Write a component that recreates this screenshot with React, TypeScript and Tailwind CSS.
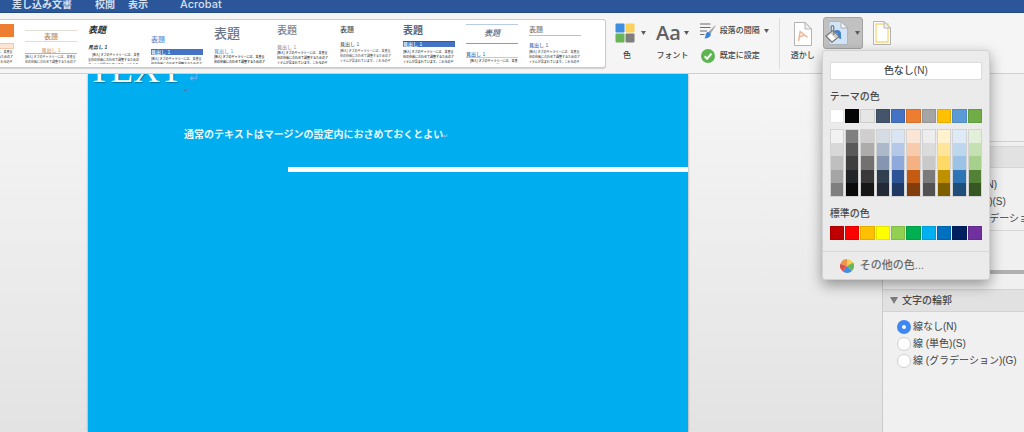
import type { ReactNode } from "react";

const menuItems = ["差し込み文書", "校閲", "表示", "Acrobat"];

type Style = { title: string; heading: string; text: string; blocksOnly?: boolean };

const styleGallery: Style[] = [
  {
    title: "h-[13px] bg-[#ed7d31]",
    heading: "mt-[6px] h-[6px] bg-[#fbe5d5] border border-[#f4c7a5]",
    text: "text-[#444]",
    blocksOnly: true,
  },
  {
    title: "mt-[6px] h-3 justify-center border-y border-[#e2dcd6] text-[7px] font-medium text-[#b98c68]",
    heading: "mt-[5px] h-[7px] justify-center border-b border-[#e3a778] text-[#c9a184]",
    text: "text-[#555]",
  },
  {
    title: "h-[13px] text-[9px] font-bold italic text-[#2b2b2b]",
    heading: "mt-[7px] h-[6px] font-bold italic text-[#333]",
    text: "mt-[2px] indent-1 text-[#444]",
  },
  {
    title: "mt-[9px] h-3 text-[7px] font-medium text-[#5b8fd0]",
    heading: "mt-1 h-[6px] bg-[#4472c4] text-white",
    text: "mt-px text-[#444]",
  },
  {
    title: "h-[18px] text-[13px] text-[#6d7688]",
    heading: "mt-[6px] h-[6px] text-[#6f9fd8]",
    text: "text-[#222]",
  },
  {
    title: "h-[14px] text-[10px] text-[#7d828e]",
    heading: "mt-[6px] h-[6px] text-[#999]",
    text: "text-[#333]",
  },
  {
    title: "h-[11px] text-[7px] font-medium text-[#4a4a4a]",
    heading: "mt-[6px] h-[6px] text-[#666]",
    text: "mt-px text-[#555]",
  },
  {
    title: "h-[14px] text-[10px] font-bold text-[#52637c]",
    heading: "mt-[3px] h-[6px] border-t border-[#555] bg-[#4472c4] text-white",
    text: "mt-[2px] text-[#333]",
  },
  {
    title: "h-5 justify-center border-t border-b border-t-[#b9cde6] border-b-[#9a9a9a] text-[8px] font-medium italic text-[#5a6a85]",
    heading: "mt-[7px] h-[7px] border-b border-[#b9cde6] text-[#3d70b5]",
    text: "indent-1 text-[#333]",
  },
  {
    title: "h-3 border-b border-[#a9c4e4] text-[7px] font-medium text-[#7b7b7b]",
    heading: "mt-[6px] h-[6px] text-[#3d70b5]",
    text: "mt-px text-[#444]",
  },
];

const themeColors = [
  { name: "白", base: "bg-white", tints: ["bg-[#f2f2f2]", "bg-[#d8d8d8]", "bg-[#bfbfbf]", "bg-[#a5a5a5]", "bg-[#7f7f7f]"] },
  { name: "黒", base: "bg-[#050505]", tints: ["bg-[#7f7f7f]", "bg-[#595959]", "bg-[#3f3f3f]", "bg-[#222428]", "bg-[#0a0a0a]"] },
  { name: "薄い灰色", base: "bg-[#e7e6e6]", tints: ["bg-[#d0cece]", "bg-[#aeabab]", "bg-[#737070]", "bg-[#3a3838]", "bg-[#171616]"] },
  { name: "ブルーグレー", base: "bg-[#44546a]", tints: ["bg-[#d6dce4]", "bg-[#adb9ca]", "bg-[#8496b0]", "bg-[#323f4f]", "bg-[#222a35]"] },
  { name: "青", base: "bg-[#4472c4]", tints: ["bg-[#d9e5f3]", "bg-[#b4c9e7]", "bg-[#8eaadb]", "bg-[#2f5496]", "bg-[#1f3864]"] },
  { name: "オレンジ", base: "bg-[#ed7d31]", tints: ["bg-[#fbe5d5]", "bg-[#f7cbac]", "bg-[#f4b183]", "bg-[#c55a11]", "bg-[#833c0b]"] },
  { name: "灰色", base: "bg-[#a5a5a5]", tints: ["bg-[#ededed]", "bg-[#dbdbdb]", "bg-[#c9c9c9]", "bg-[#7b7b7b]", "bg-[#525252]"] },
  { name: "ゴールド", base: "bg-[#ffc000]", tints: ["bg-[#fff2cc]", "bg-[#fee599]", "bg-[#ffd965]", "bg-[#bf9000]", "bg-[#7f6000]"] },
  { name: "水色", base: "bg-[#5b9bd5]", tints: ["bg-[#deebf6]", "bg-[#bdd7ee]", "bg-[#9cc3e5]", "bg-[#2e75b5]", "bg-[#1e4e79]"] },
  { name: "緑", base: "bg-[#70ad47]", tints: ["bg-[#e2efd9]", "bg-[#c5e0b3]", "bg-[#a8d08d]", "bg-[#538135]", "bg-[#375623]"] },
];

const standardColors = [
  { name: "濃い赤", color: "bg-[#c00000]" },
  { name: "赤", color: "bg-[#ff0000]" },
  { name: "オレンジ", color: "bg-[#ffc000]" },
  { name: "黄", color: "bg-[#ffff00]" },
  { name: "薄い緑", color: "bg-[#92d050]" },
  { name: "緑", color: "bg-[#00b050]" },
  { name: "薄い青", color: "bg-[#00b0f0]" },
  { name: "青", color: "bg-[#0070c0]" },
  { name: "濃い青", color: "bg-[#002060]" },
  { name: "紫", color: "bg-[#7030a0]" },
];

function Caret() {
  return (
    <svg className="h-1 w-[5px] shrink-0" viewBox="0 0 5 4" aria-hidden="true">
      <path d="M0 0h5L2.5 4z" fill="#5c5c5c" />
    </svg>
  );
}

function StyleCard({ style }: { style: Style }) {
  return (
    <button type="button" className="flex h-10 w-[52px] shrink-0 flex-col overflow-hidden text-left leading-none">
      <span className={`flex w-full shrink-0 items-center ${style.title}`}>{style.blocksOnly ? null : "表題"}</span>
      <span className={`flex w-full shrink-0 items-center text-[5px] ${style.heading}`}>
        {style.blocksOnly ? null : "見出し 1"}
      </span>
      <span className={`w-full pt-px text-[3px] leading-[5px] font-medium ${style.text}`}>
        [挿入] タブのギャラリーには、文書全体の体裁に合わせて調整するためのアイテムが含まれています。これらのギ
      </span>
    </button>
  );
}

function ColorsIcon() {
  return (
    <svg className="h-5 w-5" viewBox="0 0 20 20" aria-hidden="true">
      <rect x="0.5" y="0.5" width="9" height="9" rx="1" fill="#3f8fe0" />
      <rect x="10.5" y="0.5" width="9" height="9" rx="1" fill="#fbd15b" />
      <rect x="0.5" y="10.5" width="9" height="9" rx="1" fill="#68b457" />
      <rect x="10.5" y="10.5" width="9" height="9" rx="1" fill="#7f7f7f" />
    </svg>
  );
}

function SpacingIcon() {
  return (
    <svg className="h-4 w-4" viewBox="0 0 16 16" aria-hidden="true">
      <path d="M0 1h10.500M0 4.500h10.500M0 8h7M0 11.500h4.500" stroke="#6d6d6d" strokeWidth="1.100" />
      <path d="M15.800 2.600 10.800 10.400 8.600 8.800 15 2.400z" fill="#a7a7a7" />
      <path d="M8 9c2 0 3.300 1.500 2.700 3.200C10 14.500 7 15.600 4 15.300c1.500-.8 1.300-2 1.700-3.600C6 10.200 6.800 9 8 9z" fill="#3b83d8" />
    </svg>
  );
}

function CheckIcon() {
  return (
    <svg className="h-4 w-4" viewBox="0 0 16 16" aria-hidden="true">
      <circle cx="8" cy="8" r="7" fill="#5cb551" />
      <path d="m4.700 8.200 2.400 2.500 4.400-5" fill="none" stroke="#fff" strokeWidth="2" />
    </svg>
  );
}

function PageIcon({ children }: { children: ReactNode }) {
  return (
    <svg className="h-6 w-[18px]" viewBox="0 0 18 24" aria-hidden="true">
      <path d="M.5.500h10.500l6.500 6.500v16.500H.500z" fill="#fff" stroke="#b4b4b4" />
      {children}
      <path d="M11 .500V7h6.500z" fill="#f1f1f1" stroke="#b4b4b4" />
    </svg>
  );
}

function PageColorIcon() {
  return (
    <svg className="h-6 w-6" viewBox="0 0 24 24" aria-hidden="true">
      <path d="M4 .500h12l6.500 6.500v16.500H4z" fill="#d3e4f6" stroke="#aeb8c2" />
      <path d="M16 .500V7h6.500z" fill="#f5f5f5" stroke="#adadad" />
      <path d="M9.500 9.500c3.500-1.500 6.300 0 6.500 3 .1 2.200-.2 3.500.3 5.500-2.300 0-3.300-1.200-3.300-3.500 0-2-1-3-3.500-2.500z" fill="#3d82cf" />
      <path d="m1 15 7-5.500 6 6L7 21.200z" fill="#fff" stroke="#777" strokeWidth="1.300" />
      <path d="m8 10.500 5 5-2.500 2-5-5z" fill="#cdcdcd" />
      <path d="M8.800 14V6c0-1.800-2.600-1.800-2.600 0v5" fill="none" stroke="#777" strokeWidth="1.200" />
    </svg>
  );
}

function WheelIcon() {
  return (
    <svg className="h-[14px] w-[14px]" viewBox="-7 -7 14 14" aria-hidden="true">
      <path d="M0 0V-7A7 7 0 0 1 6.060-3.500z" fill="#f9d257" />
      <path d="M0 0 6.060-3.500A7 7 0 0 1 4.950 4.950z" fill="#69b65a" />
      <path d="M0 0 4.950 4.950A7 7 0 0 1-4.500 5.360z" fill="#438de0" />
      <path d="M0 0-4.500 5.360A7 7 0 0 1-6.600-2.330z" fill="#dc5249" />
      <path d="M0 0-6.600-2.330A7 7 0 0 1 0-7z" fill="#f29446" />
    </svg>
  );
}

function ColorPopup() {
  return (
    <div className="absolute top-[33px] -left-px z-20 w-[168px] rounded-[3px] border border-[#d2d2d2] bg-[#ebebeb] text-[10px] leading-none text-[#484848] shadow-[0_5px_14px_rgba(0,0,0,0.38)]">
      <div className="px-[7px] pt-[11px]">
        <button type="button" className="h-[18px] w-full border border-[#dcdcdc] bg-white">
          色なし(N)
        </button>
        <h2 className="mt-3 font-medium">テーマの色</h2>
        <div className="mt-[7px] grid grid-cols-10 gap-px">
          {themeColors.map((c) => (
            <button key={c.name} type="button" aria-label={c.name} className={`h-[14px] border border-black/10 ${c.base}`} />
          ))}
        </div>
        <div className="mt-[6px] grid grid-cols-10 gap-px">
          {themeColors.map((c) => (
            <div key={c.name} className="flex h-[68px] flex-col border border-black/10">
              {c.tints.map((t, i) => (
                <button key={t} type="button" aria-label={`${c.name} ${i + 1}`} className={`flex-1 ${t}`} />
              ))}
            </div>
          ))}
        </div>
        <h2 className="mt-3 font-medium">標準の色</h2>
        <div className="mt-[7px] grid grid-cols-10 gap-px pb-[11px]">
          {standardColors.map((c) => (
            <button key={c.name} type="button" aria-label={c.name} className={`h-[14px] border border-black/10 ${c.color}`} />
          ))}
        </div>
      </div>
      <button type="button" className="flex h-7 w-full items-center gap-[6px] border-t border-[#d6d6d6] pl-[17px] text-[11px] text-[#6a6a6a]">
        <WheelIcon />
        その他の色...
      </button>
    </div>
  );
}

function RadioGroup({ name, options, selected }: { name: string; options: string[]; selected: number }) {
  return (
    <div className="flex flex-col gap-[3px] pl-[14px]">
      {options.map((option, i) => (
        <label key={option} className="flex items-center gap-[2px] text-[10px] leading-[14px] whitespace-nowrap text-[#444]">
          <input
            type="radio"
            name={name}
            defaultChecked={i === selected}
            className="h-[14px] w-[14px] shrink-0 appearance-none rounded-full border border-[#cfcfcf] bg-white checked:border-[5px] checked:border-[#3f87f5]"
          />
          {option}
        </label>
      ))}
    </div>
  );
}

function Ribbon() {
  return (
    <div className="relative z-10 flex h-[61px] items-start border-b border-[#cfcfcf] bg-[#f5f5f5] text-[8px] leading-none font-medium text-[#444]">
      <div className="mt-[6px] flex h-[49px] w-[606px] shrink-0 justify-end gap-[11px] overflow-hidden rounded-r-[3px] border border-l-0 border-[#cdcdcd] bg-white pt-1 pr-6 shadow-[0_1px_1px_rgba(0,0,0,0.15)]">
        {styleGallery.map((s, i) => (
          <StyleCard key={i} style={s} />
        ))}
      </div>

      <button type="button" className="mt-[10px] ml-[9px] flex flex-col gap-[9px] text-left">
        <span className="flex h-5 items-center gap-[6px]">
          <ColorsIcon />
          <Caret />
        </span>
        <span className="pl-2">色</span>
      </button>

      <button type="button" className="mt-[10px] ml-[10px] flex flex-col items-center gap-[9px]">
        <span className="flex h-5 items-center gap-[3px]">
          <span className="font-['Open_Sans',sans-serif] text-[20px] font-semibold text-[#606060]">Aa</span>
          <Caret />
        </span>
        フォント
      </button>

      <div className="mt-[10px] ml-[11px] flex flex-col gap-[9px]">
        <button type="button" className="flex items-center gap-1">
          <SpacingIcon />
          段落の間隔
          <Caret />
        </button>
        <button type="button" className="flex items-center gap-1">
          <CheckIcon />
          既定に設定
        </button>
      </div>

      <div className="mt-[5px] ml-[10px] h-[51px] w-px bg-[#dcdcdc]" />

      <button type="button" className="mt-[9px] ml-[11px] flex flex-col items-center gap-[6px]">
        <PageIcon>
          <path d="m4.500 19 1.700-9.500 7.300 5.800M5.200 15.300l5.300-2.400" fill="none" stroke="#eeb691" strokeWidth="1.500" />
        </PageIcon>
        透かし
      </button>

      <div className="relative mt-1 ml-2">
        <button
          type="button"
          aria-label="ページの色"
          aria-expanded="true"
          className="flex h-8 w-10 items-center justify-center gap-[6px] rounded-[3px] border border-[#a3a3a3] bg-[#c1c1c1]"
        >
          <PageColorIcon />
          <Caret />
        </button>
        <ColorPopup />
      </div>

      <button type="button" aria-label="ページ罫線" className="mt-2 ml-[10px]">
        <PageIcon>
          <path d="M3 3h12v18H3z" fill="none" stroke="#fbd777" strokeWidth="1.300" />
        </PageIcon>
      </button>
    </div>
  );
}

export default function App() {
  return (
    <div className="flex min-h-screen flex-col overflow-hidden bg-[#ededed] font-['Liberation_Sans','Noto_Sans_CJK_JP',sans-serif]">
      <nav className="flex h-[13px] items-center gap-[13px] overflow-hidden border-b border-[#224a86] bg-[#2b579a] pb-[3px] pl-3 text-[10px] leading-none font-bold text-[#d5dfee]">
        {menuItems.map((m, i) => (
          <a key={m} href="#" className={i === 0 ? "mr-[10px]" : i === 3 ? "ml-[19px] font-['Inter',sans-serif] text-[11px] font-medium" : ""}>
            {m}
          </a>
        ))}
      </nav>

      <Ribbon />

      <div className="flex flex-1">
        <main className="flex flex-1 bg-linear-to-b from-[#f6f6f6] to-[#e3e3e3] pl-[88px]">
          <article className="w-[600px] overflow-hidden bg-[#00aeef] text-white shadow-[0_0_2px_rgba(0,0,0,0.4)]">
            <div className="flex h-[10px] items-end">
              <h1 className="font-['Liberation_Serif',serif] text-[37px] leading-[29px] text-shadow-[1px_1px_1px_rgba(0,0,0,0.3)]">TEXT</h1>
              <span className="pl-[6px] text-[12px] leading-[12px] text-[#7db4f5]">↵</span>
            </div>
            <p className="pt-[3px] pl-24 text-[6px] leading-[6px] text-[#8a5a8c]">↵</p>
            <p className="mt-[34px] pl-24 text-[10px] leading-4 font-bold whitespace-nowrap text-[#eaf8fe]">
              通常のテキストはマージンの設定内におさめておくとよい
              <span className="text-[6px] text-[#7fc8f5]">↵</span>
            </p>
            <div className="mt-[23px] ml-[200px] h-[5px] bg-white" />
          </article>
        </main>

        <aside className="w-[142px] overflow-hidden border-l border-[#cccccc] bg-[#f0f0f0]">
          <div className="h-[68px] border-b border-[#cfcfcf]" />
          <div className="mt-1 h-[22px] border-y border-[#d6d6d6] bg-[#e2e2e2]" />
          <div className="h-[63px] border-b border-[#d6d6d6] pt-[10px]">
            <RadioGroup
              name="text-fill"
              selected={1}
              options={["塗りつぶしなし(N)", "塗りつぶし (単色)(S)", "塗りつぶし (グラデーション)(G)"]}
            />
          </div>
          <div className="mt-[39px] h-1 bg-[#b0b0b0]" />
          <section className="mt-[15px]">
            <h2 className="flex h-[23px] items-center gap-1 border-y border-[#d3d3d3] bg-[#e1e1e1] pl-[7px] text-[10px] leading-none font-medium text-[#484848]">
              <svg className="h-[7px] w-2" viewBox="0 0 8 7" aria-hidden="true">
                <path d="M0 0h8L4 7z" fill="#7c7c7c" />
              </svg>
              文字の輪郭
            </h2>
            <div className="pt-2">
              <RadioGroup name="text-outline" selected={0} options={["線なし(N)", "線 (単色)(S)", "線 (グラデーション)(G)"]} />
            </div>
          </section>
        </aside>
      </div>
    </div>
  );
}
